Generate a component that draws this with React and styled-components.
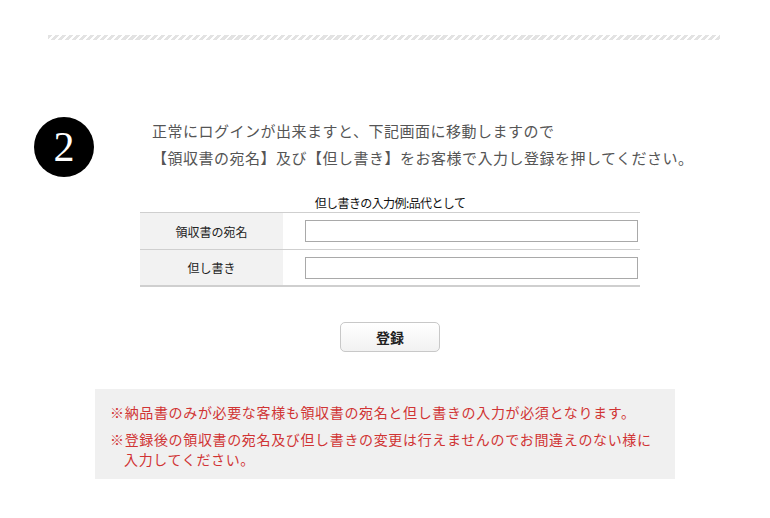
import React from "react";
import styled, { createGlobalStyle } from "styled-components";

const GlobalStyle = createGlobalStyle`
  body {
    margin: 0;
    background: #fff;
    font-family: "Noto Sans CJK JP", "Noto Sans", sans-serif;
  }
`;

const Page = styled.div`
  width: 770px;
  padding-top: 35px;
`;

const Hatch = styled.div`
  margin-left: 48px;
  width: 672px;
  height: 5px;
  background: repeating-linear-gradient(
    135deg,
    #e3e3e3 0 3px,
    transparent 3px 5px
  );
`;

const Step = styled.div`
  display: flex;
  align-items: flex-start;
  margin-top: 77px;
  padding-left: 34px;
`;

const Circle = styled.div`
  width: 60px;
  height: 60px;
  border-radius: 50%;
  background: #000;
  color: #fff;
  display: flex;
  align-items: center;
  justify-content: center;
  font-family: "Liberation Serif", serif;
  font-size: 42px;
  line-height: 1;
  flex-shrink: 0;
`;

const Lead = styled.p`
  margin: 0 0 0 58px;
  font-size: 15px;
  line-height: 27px;
  letter-spacing: 0.5px;
  color: #555;
`;

const FormArea = styled.div`
  width: 500px;
  margin: 18px 0 0 140px;
`;

const Caption = styled.div`
  text-align: center;
  font-size: 12px;
  line-height: 16px;
  letter-spacing: -0.6px;
  color: #111;
  margin-bottom: 1px;
`;

const Table = styled.div`
  border-top: 1px solid #cfcfcf;
  border-bottom: 2px solid #cfcfcf;
`;

const Row = styled.div`
  display: flex;
  align-items: center;
  height: ${(p) => p.$h}px;
  border-top: ${(p) => (p.$first ? "none" : "1px solid #cfcfcf")};
`;

const Label = styled.div`
  width: 143px;
  height: 100%;
  background: #f2f2f2;
  display: flex;
  align-items: center;
  justify-content: center;
  font-size: 12px;
  color: #222;
`;

const Field = styled.input`
  box-sizing: border-box;
  margin-left: 22px;
  width: 333px;
  height: 22px;
  border: 1px solid #a9a9a9;
  padding: 0 4px;
  font-size: 12px;
  outline: none;
`;

const ButtonWrap = styled.div`
  display: flex;
  justify-content: center;
  margin-top: 35px;
`;

const Button = styled.button`
  width: 100px;
  height: 30px;
  border: 1px solid #c8c8c8;
  border-radius: 5px;
  background: linear-gradient(#ffffff, #f1f1f1);
  font-family: "Noto Sans CJK JP", sans-serif;
  font-size: 14px;
  font-weight: bold;
  color: #222;
  cursor: pointer;
`;

const Notice = styled.div`
  margin: 37px 0 0 95px;
  width: 580px;
  box-sizing: border-box;
  background: #f0f0f0;
  padding: 13px 15px 10px;
`;

const NoteLine = styled.p`
  margin: ${(p) => (p.$first ? "0" : "7px 0 0")};
  padding-left: 1em;
  text-indent: -1em;
  font-size: 14px;
  line-height: 20px;
  letter-spacing: 0.65px;
  color: #d03434;
`;

export default function App() {
  return (
    <Page>
      <GlobalStyle />
      <Hatch />
      <Step>
        <Circle>2</Circle>
        <Lead>
          正常にログインが出来ますと、下記画面に移動しますので
          <br />
          【領収書の宛名】及び【但し書き】をお客様で入力し登録を押してください。
        </Lead>
      </Step>
      <FormArea>
        <Caption>但し書きの入力例:品代として</Caption>
        <Table>
          <Row $first $h={36}>
            <Label>領収書の宛名</Label>
            <Field type="text" />
          </Row>
          <Row $h={35}>
            <Label>但し書き</Label>
            <Field type="text" />
          </Row>
        </Table>
        <ButtonWrap>
          <Button>登録</Button>
        </ButtonWrap>
      </FormArea>
      <Notice>
        <NoteLine $first>
          ※納品書のみが必要な客様も領収書の宛名と但し書きの入力が必須となります。
        </NoteLine>
        <NoteLine>
          ※登録後の領収書の宛名及び但し書きの変更は行えませんのでお間違えのない様に
          <br />
          入力してください。
        </NoteLine>
      </Notice>
    </Page>
  );
}
